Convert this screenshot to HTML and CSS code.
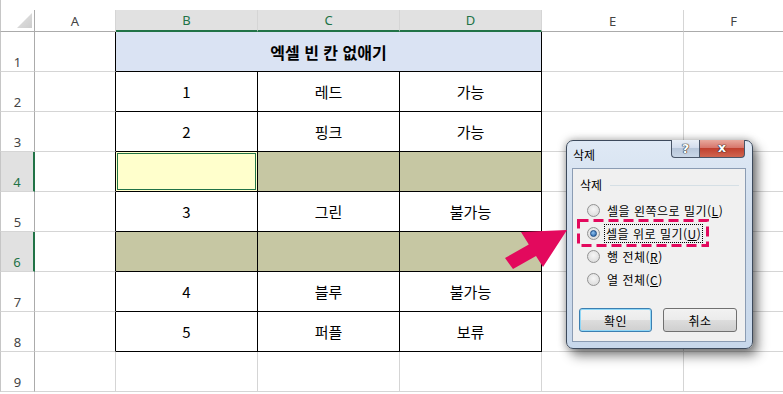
FILE: index.html
```html
<!DOCTYPE html>
<html lang="ko">
<head>
    <meta charset="UTF-8">
    <title>엑셀 빈 칸 없애기</title>
    <link rel="stylesheet" href="styles.css">
</head>
<body>
    <div class="topstrip"></div>
    <div class="sheet">
        <div class="corner"><span class="tri"></span></div>
        <div class="hd">A</div>
        <div class="hd sel">B</div>
        <div class="hd sel">C</div>
        <div class="hd sel">D</div>
        <div class="hd">E</div>
        <div class="hd last">F</div>

        <div class="rh">1</div>
        <div class="c edge"></div>
        <div class="t title">엑셀 빈 칸 없애기</div>
        <div class="c"></div>
        <div class="c last"></div>

        <div class="rh">2</div>
        <div class="c edge"></div>
        <div class="t">1</div>
        <div class="t">레드</div>
        <div class="t">가능</div>
        <div class="c"></div>
        <div class="c last"></div>

        <div class="rh">3</div>
        <div class="c edge"></div>
        <div class="t">2</div>
        <div class="t">핑크</div>
        <div class="t">가능</div>
        <div class="c"></div>
        <div class="c last"></div>

        <div class="rh sel">4</div>
        <div class="c edge"></div>
        <div class="t active"></div>
        <div class="t olive"></div>
        <div class="t olive"></div>
        <div class="c"></div>
        <div class="c last"></div>

        <div class="rh">5</div>
        <div class="c edge"></div>
        <div class="t">3</div>
        <div class="t">그린</div>
        <div class="t">불가능</div>
        <div class="c"></div>
        <div class="c last"></div>

        <div class="rh sel">6</div>
        <div class="c edge"></div>
        <div class="t olive"></div>
        <div class="t olive"></div>
        <div class="t olive"></div>
        <div class="c"></div>
        <div class="c last"></div>

        <div class="rh">7</div>
        <div class="c edge"></div>
        <div class="t">4</div>
        <div class="t">블루</div>
        <div class="t">불가능</div>
        <div class="c"></div>
        <div class="c last"></div>

        <div class="rh">8</div>
        <div class="c edge"></div>
        <div class="t">5</div>
        <div class="t">퍼플</div>
        <div class="t">보류</div>
        <div class="c"></div>
        <div class="c last"></div>

        <div class="rh">9</div>
        <div class="c"></div>
        <div class="c"></div>
        <div class="c"></div>
        <div class="c"></div>
        <div class="c"></div>
        <div class="c last"></div>
    </div>

    <div class="dialog">
        <div class="titlebar">
            <span class="caption">삭제</span>
            <div class="caption-btns">
                <span class="cbtn help">?</span>
                <span class="cbtn close">x</span>
            </div>
        </div>
        <div class="client">
            <div class="group-label">
                <span>삭제</span>
                <span class="group-line"></span>
            </div>
            <div class="options">
                <div class="option"><span class="radio"></span><span>셀을 왼쪽으로 밀기(<u>L</u>)</span></div>
                <div class="option"><span class="radio on"></span><span class="focus">셀을 위로 밀기(<u>U</u>)</span></div>
                <div class="option"><span class="radio"></span><span>행 전체(<u>R</u>)</span></div>
                <div class="option"><span class="radio"></span><span>열 전체(<u>C</u>)</span></div>
            </div>
            <div class="buttons">
                <button class="btn default">확인</button>
                <button class="btn">취소</button>
            </div>
        </div>
    </div>

    <!-- annotation: arrow and dashed highlight -->
    <svg class="marks" width="783" height="394" viewBox="0 0 783 394">
        <rect x="578.5" y="220.5" width="129" height="25" fill="none" stroke="#e3095d" stroke-width="3" stroke-dasharray="10 5"/>
        <polygon points="505,258 528.8,244.4 521,232 567,230 543,267 536,255.9 513,269" fill="#e3095d"/>
    </svg>
</body>
</html>
```

FILE: styles.css
```css
body {
    margin: 0;
    width: 783px;
    height: 394px;
    overflow: hidden;
    position: relative;
    background: #fff;
    font-family: "Noto Sans CJK KR", "Noto Sans", sans-serif;
}

.topstrip {
    height: 10px;
    border-left: 1px solid #c6c6c6;
}

.sheet {
    display: grid;
    grid-template-columns: 35px 81px 142px 142px 142px 142px 99px;
    grid-template-rows: 22px repeat(9, 40px);
}

.sheet > div {
    box-sizing: border-box;
}

.corner {
    border-left: 1px solid #c6c6c6;
    border-right: 1px solid #ababab;
    border-bottom: 1px solid #ababab;
    position: relative;
}

.tri {
    position: absolute;
    left: 16px;
    top: 3px;
    width: 15px;
    height: 15px;
    background: linear-gradient(135deg, #e4e4e4, #cdcdcd);
    clip-path: polygon(100% 0, 100% 100%, 0 100%);
}

.hd {
    display: flex;
    align-items: center;
    justify-content: center;
    border-right: 1px solid #d5d5d5;
    border-bottom: 1px solid #ababab;
    font-family: "Noto Sans", sans-serif;
    font-size: 13px;
    color: #444;
}

.hd.sel {
    background: #e1e1e1;
    color: #217346;
    border-bottom: 2px solid #217346;
}

.hd.last, .c.last {
    border-right: none;
}

.rh {
    display: flex;
    align-items: flex-end;
    justify-content: center;
    padding-bottom: 1px;
    border-left: 1px solid #c6c6c6;
    border-right: 1px solid #ababab;
    border-bottom: 1px solid #d5d5d5;
    font-family: "Noto Sans", sans-serif;
    font-size: 13px;
    line-height: 16px;
    color: #444;
}

.rh.sel {
    background: #e1e1e1;
    color: #217346;
    border-right: 2px solid #217346;
}

.c {
    border-right: 1px solid #d5d5d5;
    border-bottom: 1px solid #d5d5d5;
}

.c.edge {
    border-right-color: #000;
}

.t {
    display: flex;
    align-items: center;
    justify-content: center;
    border-right: 1px solid #000;
    border-bottom: 1px solid #000;
    font-size: 15px;
    color: #000;
}

.t.title {
    grid-column: span 3;
    background: #dae3f3;
    font-weight: bold;
    font-size: 16px;
}

.t.olive {
    background: #c6c7a3;
}

.t.active {
    background: #ffffcc;
    box-shadow: inset 0 0 0 1px #ffffcc, inset 0 0 0 2px #217346;
}

/* delete dialog */
.dialog {
    position: absolute;
    left: 566px;
    top: 140px;
    width: 187px;
    height: 209px;
    box-sizing: border-box;
    border: 1px solid #3d4a5c;
    border-radius: 7px;
    background: linear-gradient(#dfe9f5, #cfdcec 40%, #c8d8eb);
    box-shadow: 0 0 8px rgba(0, 0, 0, 0.35), 5px 7px 12px rgba(0, 0, 0, 0.45);
}

.titlebar {
    height: 27px;
    display: flex;
    align-items: flex-start;
}

.caption {
    padding: 6px 0 0 6px;
    font-size: 12px;
    line-height: 16px;
    color: #000;
}

.caption-btns {
    margin-left: auto;
    margin-right: 7px;
    margin-top: -1px;
    display: flex;
}

.cbtn {
    height: 18px;
    box-sizing: border-box;
    border: 1px solid #4a5668;
    border-top: none;
    display: flex;
    align-items: center;
    justify-content: center;
    font-family: "DejaVu Sans", sans-serif;
    font-weight: bold;
    color: #fff;
    text-shadow: 0 0 1px #222, 0 0 1px #222, 0 0 1px #222;
}

.help {
    width: 28px;
    border-right: none;
    border-bottom-left-radius: 4px;
    background: linear-gradient(#e8eef6, #d3dded 45%, #b7c6da 50%, #c9d6e6);
    font-size: 13px;
}

.close {
    width: 46px;
    border-bottom-right-radius: 4px;
    background: linear-gradient(#e8a99d, #d7776c 45%, #c1412f 50%, #d0654f);
    font-size: 13px;
    padding-bottom: 2px;
}

.client {
    margin-left: 5px;
    width: 174px;
    height: 174px;
    box-sizing: border-box;
    border: 1px solid #8b9cb3;
    background: #f0f0f0;
    font-size: 12px;
    color: #000;
    padding: 8px 6px 0 6px;
}

.group-label {
    display: flex;
    align-items: center;
    height: 16px;
    line-height: 16px;
    padding-left: 1px;
}

.group-line {
    flex: 1;
    margin-left: 8px;
    border-top: 1px solid #d5dfe5;
}

.options {
    margin-top: 6px;
    letter-spacing: 0.5px;
}

.option {
    height: 23px;
    display: flex;
    align-items: center;
    padding-left: 8px;
    gap: 7px;
}

.radio {
    width: 13px;
    height: 13px;
    box-sizing: border-box;
    border-radius: 50%;
    border: 1px solid #929292;
    background: radial-gradient(circle at 50% 40%, #f6f6f6, #d6d6d6);
    display: flex;
    align-items: center;
    justify-content: center;
}

.radio.on::after {
    content: "";
    width: 5px;
    height: 5px;
    border-radius: 50%;
    background: radial-gradient(circle at 40% 35%, #8fc2f0, #1d5aa2);
    border: 1px solid #1b4b85;
}

.focus {
    outline: 1px dotted #000;
    padding: 0 1px;
    margin-left: -2px;
}

.buttons {
    margin-top: 17px;
    display: flex;
    gap: 11px;
}

.btn {
    width: 73px;
    height: 24px;
    box-sizing: border-box;
    border: 1px solid #707070;
    border-radius: 3px;
    background: linear-gradient(#f2f2f2, #ebebeb 50%, #dddddd 50%, #cfcfcf);
    font-family: "Noto Sans CJK KR", sans-serif;
    font-size: 12px;
    letter-spacing: 0.5px;
    color: #000;
    padding: 0;
}

.btn + .btn {
    width: 74px;
}

.btn.default {
    border-color: #3c7fb1;
    box-shadow: inset 0 0 0 1px #8fd7f7;
}

.marks {
    position: absolute;
    left: 0;
    top: 0;
    pointer-events: none;
}
```
